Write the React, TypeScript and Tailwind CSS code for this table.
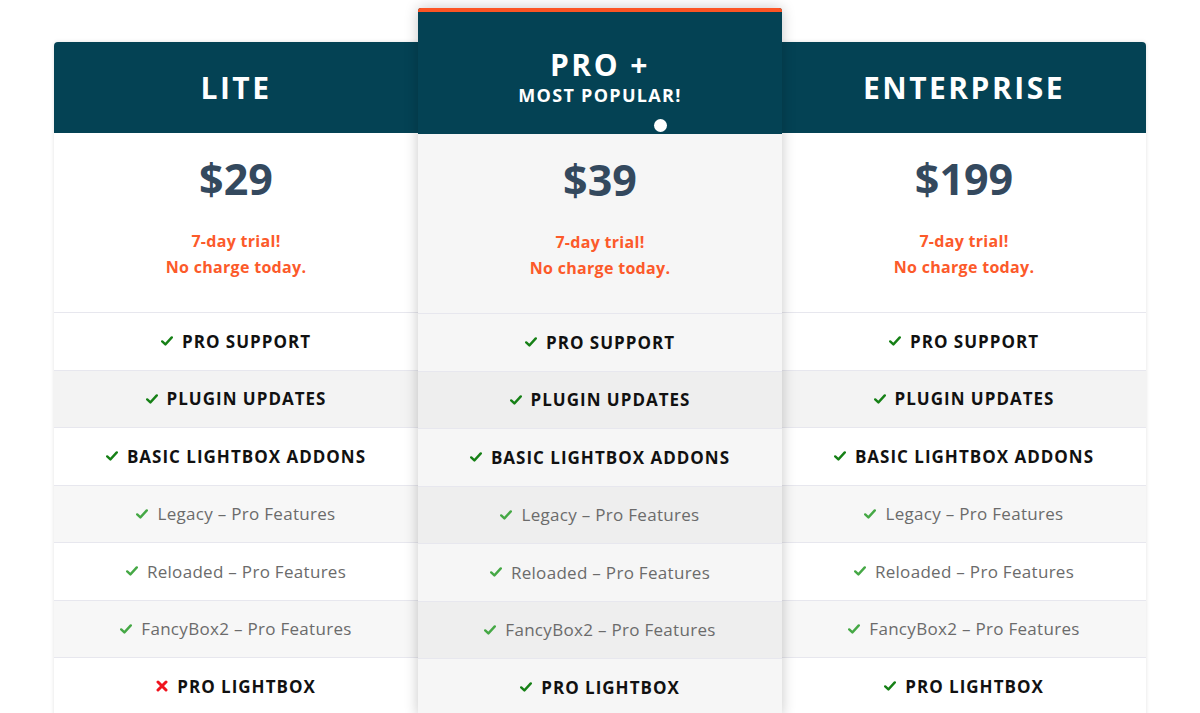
import React from "react";

type Feature = { label: string; bold: boolean; ok: boolean };

const plans = [
  { name: "LITE", price: "$29", featured: false, noLightbox: true },
  { name: "PRO +", price: "$39", featured: true, noLightbox: false },
  { name: "ENTERPRISE", price: "$199", featured: false, noLightbox: false },
];

function features(noLightbox: boolean): Feature[] {
  return [
    { label: "PRO SUPPORT", bold: true, ok: true },
    { label: "PLUGIN UPDATES", bold: true, ok: true },
    { label: "BASIC LIGHTBOX ADDONS", bold: true, ok: true },
    { label: "Legacy – Pro Features", bold: false, ok: true },
    { label: "Reloaded – Pro Features", bold: false, ok: true },
    { label: "FancyBox2 – Pro Features", bold: false, ok: true },
    { label: "PRO LIGHTBOX", bold: true, ok: !noLightbox },
  ];
}

function Check({ light }: { light: boolean }) {
  return (
    <svg width="12" height="10" viewBox="0 0 12 10" className="shrink-0">
      <path
        d="M1.2 5.4 L4.4 8.4 L10.8 1.4"
        fill="none"
        stroke={light ? "#45a845" : "#168016"}
        strokeWidth="2.4"
        strokeLinecap="round"
        strokeLinejoin="round"
      />
    </svg>
  );
}

function Cross() {
  return (
    <svg width="12" height="12" viewBox="0 0 12 12" className="shrink-0">
      <path d="M2 2 L10 10 M10 2 L2 10" stroke="#f0141e" strokeWidth="3" strokeLinecap="round" />
    </svg>
  );
}

function Card({ plan }: { plan: (typeof plans)[number] }) {
  const rows = features(plan.noLightbox);
  const mid = plan.featured;
  return (
    <div
      className={
        mid
          ? "relative z-10 w-[364px] shrink-0 shadow-[0_0_14px_rgba(0,0,0,0.22)] rounded-t-[3px] overflow-hidden"
          : plan.name === "LITE"
          ? "mt-[34px] w-[364px] shrink-0 shadow-[0_0_4px_rgba(0,0,0,0.12)] rounded-tl-[4px] overflow-hidden"
          : "mt-[34px] w-[364px] shrink-0 shadow-[0_0_4px_rgba(0,0,0,0.12)] rounded-tr-[4px] overflow-hidden"
      }
    >
      {mid ? (
        <div className="relative h-[126px] bg-[#044254] border-t-4 border-[#fc5424] flex flex-col items-center text-white">
          <div className="mt-[38px] text-[30px] leading-none font-bold tracking-[2.5px]">PRO +</div>
          <div className="mt-[6px] text-[18px] leading-none font-bold tracking-[1.3px]">MOST POPULAR!</div>
          <div className="absolute left-[236px] top-[107px] w-[13px] h-[13px] rounded-full bg-white" />
        </div>
      ) : (
        <div className="h-[91px] bg-[#044254] flex items-center justify-center text-white text-[30px] font-bold tracking-[2.5px]">
          {plan.name}
        </div>
      )}
      <div className={mid ? "bg-[#f6f6f6]" : "bg-white"}>
        <div className="h-[179px] flex flex-col items-center">
          <div className="mt-[24px] text-[43px] leading-none font-bold text-[#34495e]">{plan.price}</div>
          <div className="mt-[28px] text-[16px] leading-[26px] font-bold text-[#fc5a2a] text-center tracking-[0.3px]">
            7-day trial!
            <br />
            No charge today.
          </div>
        </div>
        {rows.map((f, i) => {
          const shade = i % 2 === 1;
          const bg = mid
            ? shade
              ? "bg-[#eeeeee]"
              : "bg-[#f6f6f6]"
            : shade
            ? i === 1
              ? "bg-[#f3f3f3]"
              : "bg-[#f7f7f7]"
            : "bg-white";
          return (
            <div
              key={f.label}
              className={`h-[57.5px] border-t border-[#e7e7ee] flex items-center justify-center gap-[9px] ${bg}`}
            >
              {f.ok ? <Check light={!f.bold} /> : <Cross />}
              <span
                className={
                  f.bold
                    ? "text-[17px] font-bold text-[#111] tracking-[1px]"
                    : "text-[17px] text-[#6b6b6b] tracking-[0.3px]"
                }
              >
                {f.label}
              </span>
            </div>
          );
        })}
      </div>
    </div>
  );
}

export default function App() {
  return (
    <div
      className="h-[713px] overflow-hidden bg-white"
      style={{ fontFamily: '"Open Sans", "Liberation Sans", sans-serif' }}
    >
      <div className="flex justify-center pt-[8px]">
        {plans.map((p) => (
          <Card key={p.name} plan={p} />
        ))}
      </div>
    </div>
  );
}
